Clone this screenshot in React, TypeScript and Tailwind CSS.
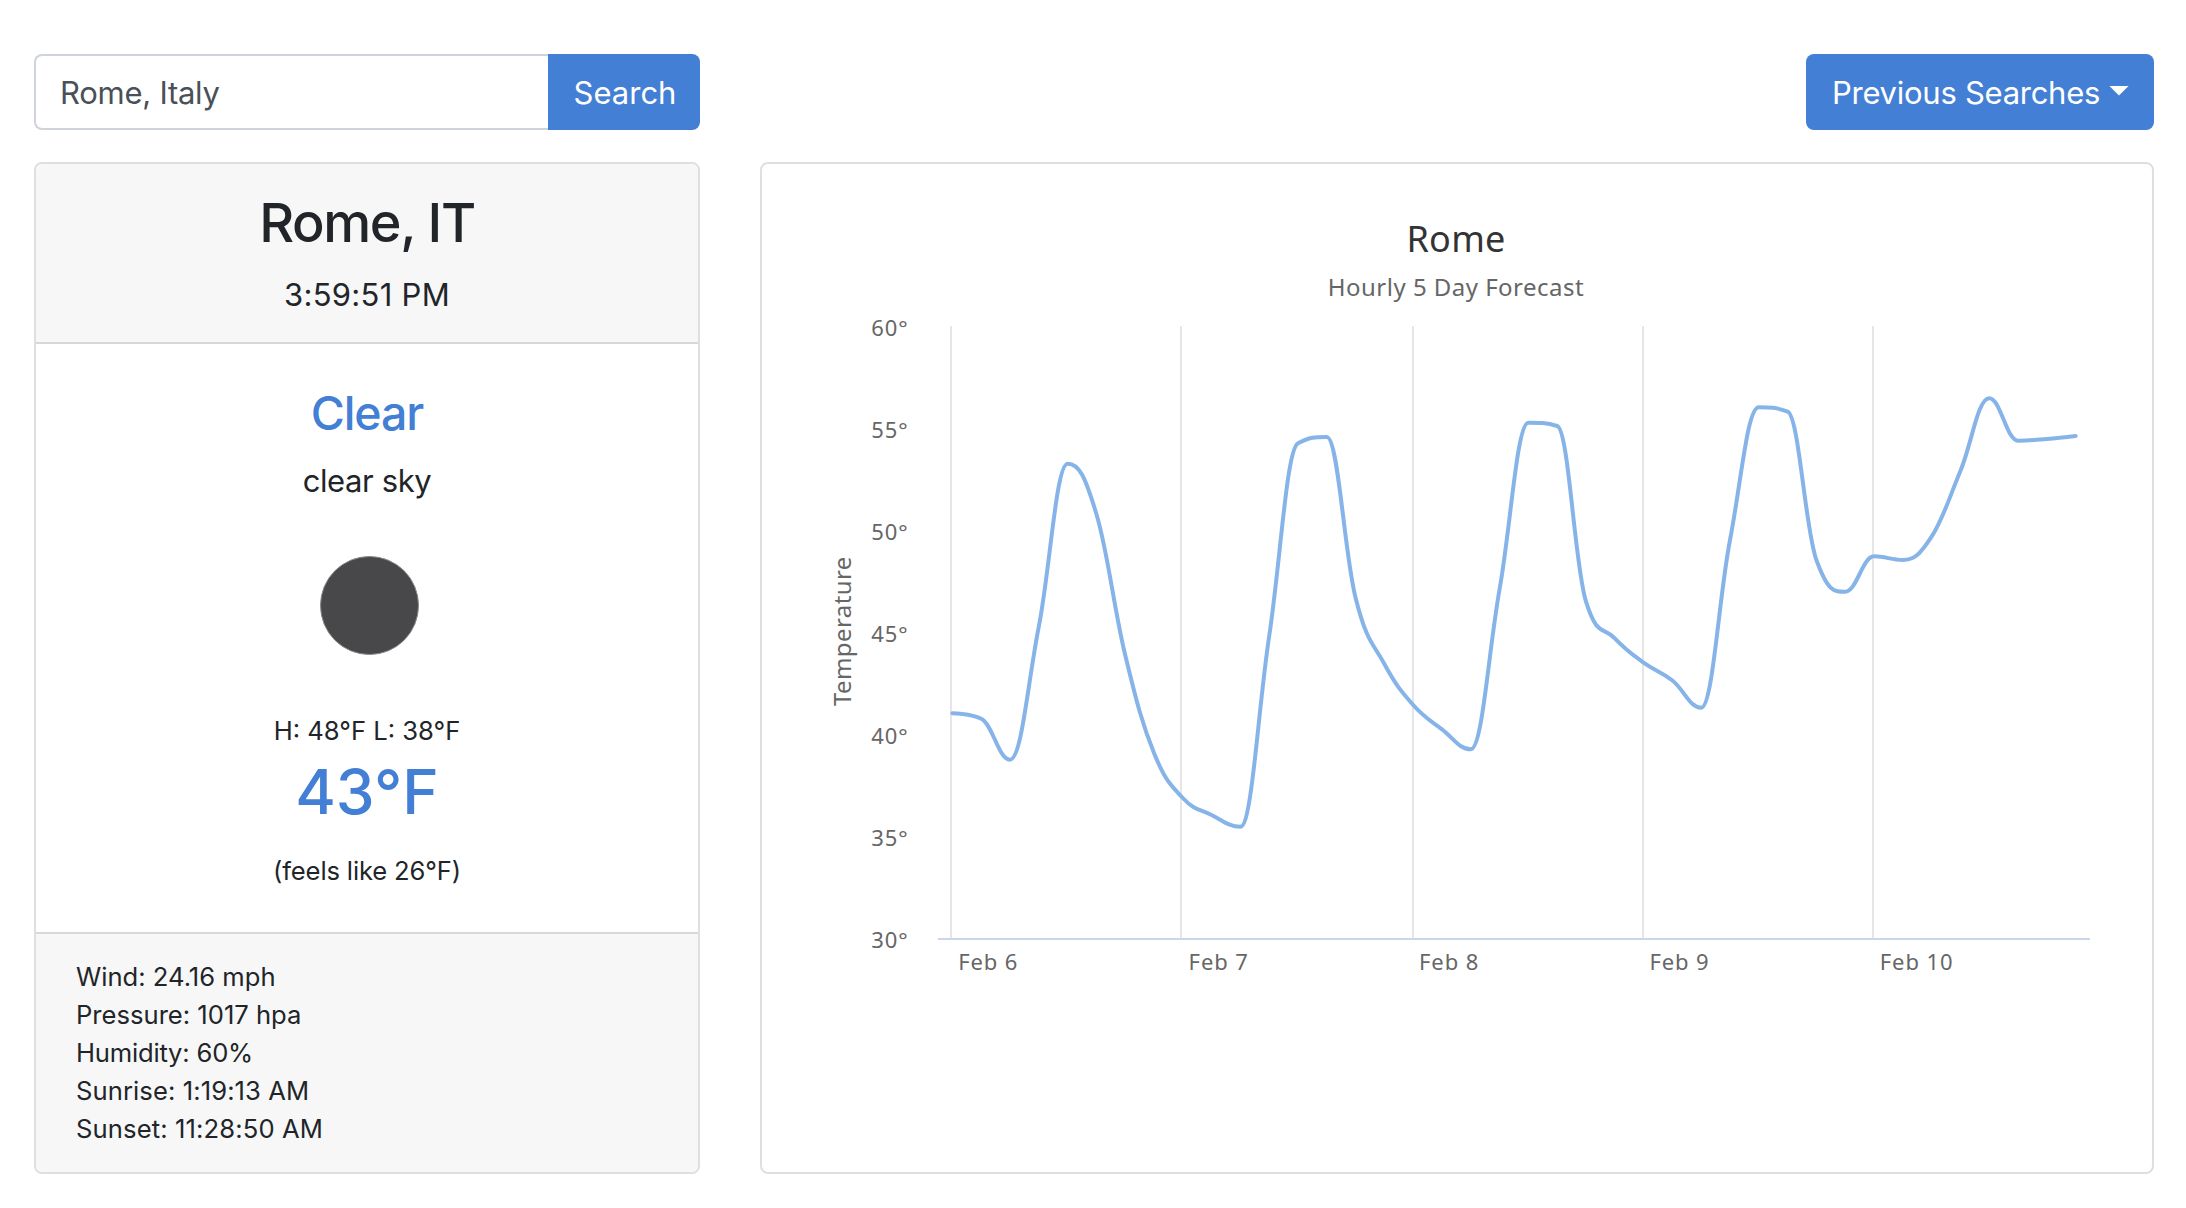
const PLOT = { left: 938, right: 2090, top: 326, bottom: 938 };
const STEP = 28.8;
const FIRST_X = 952.4;

// One reading every three hours, as heights on the plot.
const readings = [
  713.3, 718.7, 759.7, 626.7, 463.7, 514, 655, 753, 798, 815, 826.7, 636, 443.3, 437, 598, 664,
  705, 729.3, 749.3, 589, 422.7, 426, 601.7, 638.3, 662.7, 680.5, 707.7, 540, 407.3, 411.7, 560,
  591.7, 556.3, 560, 536.7, 471, 398.3, 440.7, 439, 436,
];

const days = [
  { label: "Feb 6", line: 951, x: 958.2 },
  { label: "Feb 7", line: 1181, x: 1188.6 },
  { label: "Feb 8", line: 1413, x: 1419 },
  { label: "Feb 9", line: 1643, x: 1649.4 },
  { label: "Feb 10", line: 1873, x: 1879.8 },
];

const temps = [60, 55, 50, 45, 40, 35, 30];

const facts = [
  { text: "Wind: 24.16 mph", tracking: "tracking-normal" },
  { text: "Pressure: 1017 hpa", tracking: "tracking-normal" },
  { text: "Humidity: 60%", tracking: "tracking-[-0.2px]" },
  { text: "Sunrise: 1:19:13 AM", tracking: "tracking-[0.09px]" },
  { text: "Sunset: 11:28:50 AM", tracking: "tracking-[0.12px]" },
];

// Spline whose control points never overshoot the neighbouring readings.
function splinePath(ys: number[]): string {
  const pts = ys.map((y, i) => ({ x: FIRST_X + i * STEP, y }));
  const s = 1.5;
  const d = s + 1;
  let out = `M ${pts[0].x} ${pts[0].y}`;
  let prev = { x: pts[0].x, y: pts[0].y };
  for (let i = 1; i < pts.length; i++) {
    const p = pts[i];
    const a = pts[i - 1];
    const b = pts[i + 1];
    let lx = p.x;
    let ly = p.y;
    let rx = p.x;
    let ry = p.y;
    if (b) {
      lx = (s * p.x + a.x) / d;
      ly = (s * p.y + a.y) / d;
      rx = (s * p.x + b.x) / d;
      ry = (s * p.y + b.y) / d;
      const c = ((ry - ly) * (rx - p.x)) / (rx - lx) + p.y - ry;
      ly += c;
      ry += c;
      if (ly > a.y && ly > p.y) {
        ly = Math.max(a.y, p.y);
        ry = 2 * p.y - ly;
      } else if (ly < a.y && ly < p.y) {
        ly = Math.min(a.y, p.y);
        ry = 2 * p.y - ly;
      }
      if (ry > b.y && ry > p.y) {
        ry = Math.max(b.y, p.y);
        ly = 2 * p.y - ry;
      } else if (ry < b.y && ry < p.y) {
        ry = Math.min(b.y, p.y);
        ly = 2 * p.y - ry;
      }
    }
    out += ` C ${prev.x} ${prev.y} ${lx} ${ly} ${p.x} ${p.y}`;
    prev = { x: rx, y: ry };
  }
  return out;
}

function ForecastChart() {
  return (
    <svg viewBox="762 164 1390 1008" className="block h-full w-full font-['Noto_Sans',sans-serif]">
      <text x="1406.4" y="252" className="fill-[#333333] text-[36px] tracking-[0.3px]">
        Rome
      </text>
      <text x="1327.8" y="296" className="fill-[#666666] text-[24px] tracking-[0.48px]">
        Hourly 5 Day Forecast
      </text>
      {days.map((day) => (
        <g key={day.label}>
          <rect x={day.line - 1} y={PLOT.top} width="2" height={PLOT.bottom - PLOT.top} className="fill-[#e6e6e6]" />
          <text x={day.x} y="970" className="fill-[#666666] text-[22px] tracking-[0.9px]">
            {day.label}
          </text>
        </g>
      ))}
      <rect x={PLOT.left} y={PLOT.bottom} width={PLOT.right - PLOT.left} height="2" className="fill-[#ccd6eb]" />
      {temps.map((t, i) => (
        <text key={t} x="871.2" y={336 + i * 102} className="fill-[#666666] text-[22px] tracking-[1px]">
          {t}°
        </text>
      ))}
      <text transform="translate(851 706) rotate(-90)" className="fill-[#666666] text-[24px] tracking-[0.4px]">
        Temperature
      </text>
      <path d={splinePath(readings)} className="fill-none stroke-[#86b4e8] stroke-[4px]" strokeLinecap="round" strokeLinejoin="round" />
    </svg>
  );
}

function WeatherCard() {
  return (
    <section className="flex h-[1012px] w-[666px] flex-col overflow-hidden rounded-lg border-2 border-[#dfdfdf] text-center">
      <header className="h-[180px] border-b-2 border-[#d8d8d8] bg-[#f7f7f7] pt-[27px]">
        <h2 className="text-[54px] leading-[64px] font-medium tracking-[-1.4px]">Rome, IT</h2>
        <p className="mt-4 text-[31px] leading-[48px] tracking-[0.3px]">3:59:51 PM</p>
      </header>
      <div className="flex h-[588px] flex-col items-center pt-[41px]">
        <h3 className="text-[46.5px] leading-[56px] font-medium tracking-[-1.1px] text-[#437fd4]">Clear</h3>
        <p className="mt-4 text-[31px] leading-[48px] tracking-[-0.4px]">clear sky</p>
        <div className="mt-[51px] ml-[5px] size-[99px] rounded-full border border-[#8a8a8a] bg-[#48484a]" />
        <p className="mt-[57px] text-[25.6px] leading-[38px]">H: 48°F L: 38°F</p>
        <p className="mt-1 text-[62px] leading-[76px] font-medium text-[#437fd4]">43°F</p>
        <p className="mt-[22px] text-[25.6px] leading-[38px] tracking-[-0.15px]">(feels like 26°F)</p>
      </div>
      <footer className="flex-1 border-t-2 border-[#d8d8d8] bg-[#f7f7f7] pt-6 pl-10 text-left">
        {facts.map((fact) => (
          <p key={fact.text} className={`text-[25.6px] leading-[38px] ${fact.tracking}`}>
            {fact.text}
          </p>
        ))}
      </footer>
    </section>
  );
}

export default function App() {
  return (
    <main className="h-[1208px] w-[2186px] overflow-hidden bg-white pt-[54px] pr-8 pl-[34px] font-['Inter',sans-serif] text-[#212529]">
      <div className="flex justify-between">
        <form className="flex h-[76px] w-[666px]">
          <input
            readOnly
            value="Rome, Italy"
            className="w-[514px] rounded-l-lg border-2 border-r-0 border-[#ced4da] bg-white pt-[3px] pl-6 text-[31px] tracking-[-0.26px] text-[#495057] outline-none"
          />
          <button type="button" className="flex-1 rounded-r-lg bg-[#437fd4] pt-[3px] pl-0.5 text-[31px] text-white">
            Search
          </button>
        </form>
        <button
          type="button"
          className="flex h-[76px] w-[348px] items-center rounded-lg bg-[#437fd4] pt-[3px] pl-[26px] text-[31px] tracking-[-0.27px] whitespace-nowrap text-white"
        >
          Previous Searches
          <svg viewBox="0 0 20 10" className="mb-[5px] ml-[9px] h-2.5 w-5 shrink-0 fill-white">
            <path d="M0.4 0h19.2L10 9.6z" />
          </svg>
        </button>
      </div>
      <div className="mt-8 flex justify-between">
        <WeatherCard />
        <section className="h-[1012px] w-[1394px] rounded-lg border-2 border-[#dfdfdf]">
          <ForecastChart />
        </section>
      </div>
    </main>
  );
}
